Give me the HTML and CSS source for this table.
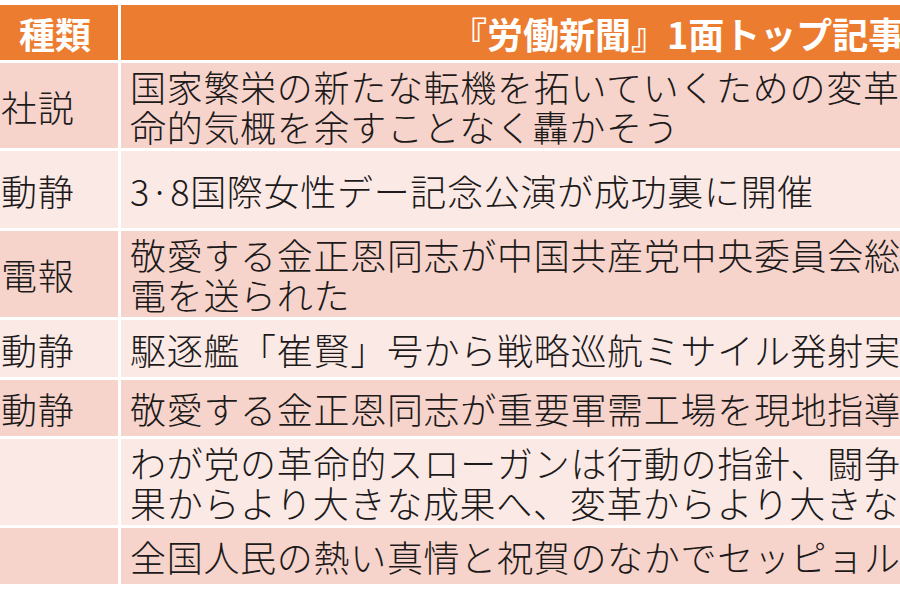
FILE: index.html
```html
<!DOCTYPE html>
<html lang="ja">
<head>
<meta charset="utf-8">
<title>労働新聞 1面トップ記事</title>
<link rel="stylesheet" href="styles.css">
</head>
<body>
<div class="table">
  <div class="cell head kind">種類</div>
  <div class="cell head title">『労働新聞』1面トップ記事</div>

  <div class="cell kind dark">社説</div>
  <div class="cell text dark">国家繁栄の新たな転機を拓いていくための変革<br>命的気概を余すことなく轟かそう</div>

  <div class="cell kind light">動静</div>
  <div class="cell text light">3·8国際女性デー記念公演が成功裏に開催</div>

  <div class="cell kind dark">電報</div>
  <div class="cell text dark">敬愛する金正恩同志が中国共産党中央委員会総<br>電を送られた</div>

  <div class="cell kind light">動静</div>
  <div class="cell text light">駆逐艦「崔賢」号から戦略巡航ミサイル発射実</div>

  <div class="cell kind dark">動静</div>
  <div class="cell text dark">敬愛する金正恩同志が重要軍需工場を現地指導</div>

  <div class="cell kind light"></div>
  <div class="cell text light">わが党の革命的スローガンは行動の指針、闘争<br>果からより大きな成果へ、変革からより大きな</div>

  <div class="cell kind dark"></div>
  <div class="cell text dark">全国人民の熱い真情と祝賀のなかでセッピョル</div>
</div>
</body>
</html>
```
FILE: styles.css
```css
html, body {
  margin: 0;
  padding: 0;
  background: #ffffff;
  overflow: hidden;
}

body {
  width: 900px;
  height: 600px;
  overflow: hidden;
  font-family: "Noto Sans CJK JP", "Noto Sans", sans-serif;
}

.table {
  display: grid;
  grid-template-columns: 118px 800px;
  grid-template-rows: 55px 85px 77px 86px 57px 56px 86px 56px;
  gap: 3px;
  margin-top: 5px;
  width: 921px;
}

.cell {
  display: flex;
  align-items: center;
  white-space: nowrap;
  overflow: hidden;
  color: #1c1a1a;
  font-size: 36px;
  line-height: 40px;
  font-weight: 300;
  letter-spacing: 0.7px;
}

.head {
  background: #ec7c30;
  color: #ffffff;
  font-weight: 700;
  font-size: 36px;
  letter-spacing: 0;
}

.head.kind {
  padding-left: 19px;
}

.head.title {
  padding-left: 330px;
}

.kind {
  padding-left: 1px;
}

.text {
  padding-left: 9px;
}

.dark {
  background: #f7d4cb;
}

.light {
  background: #fbe9e5;
}
```
